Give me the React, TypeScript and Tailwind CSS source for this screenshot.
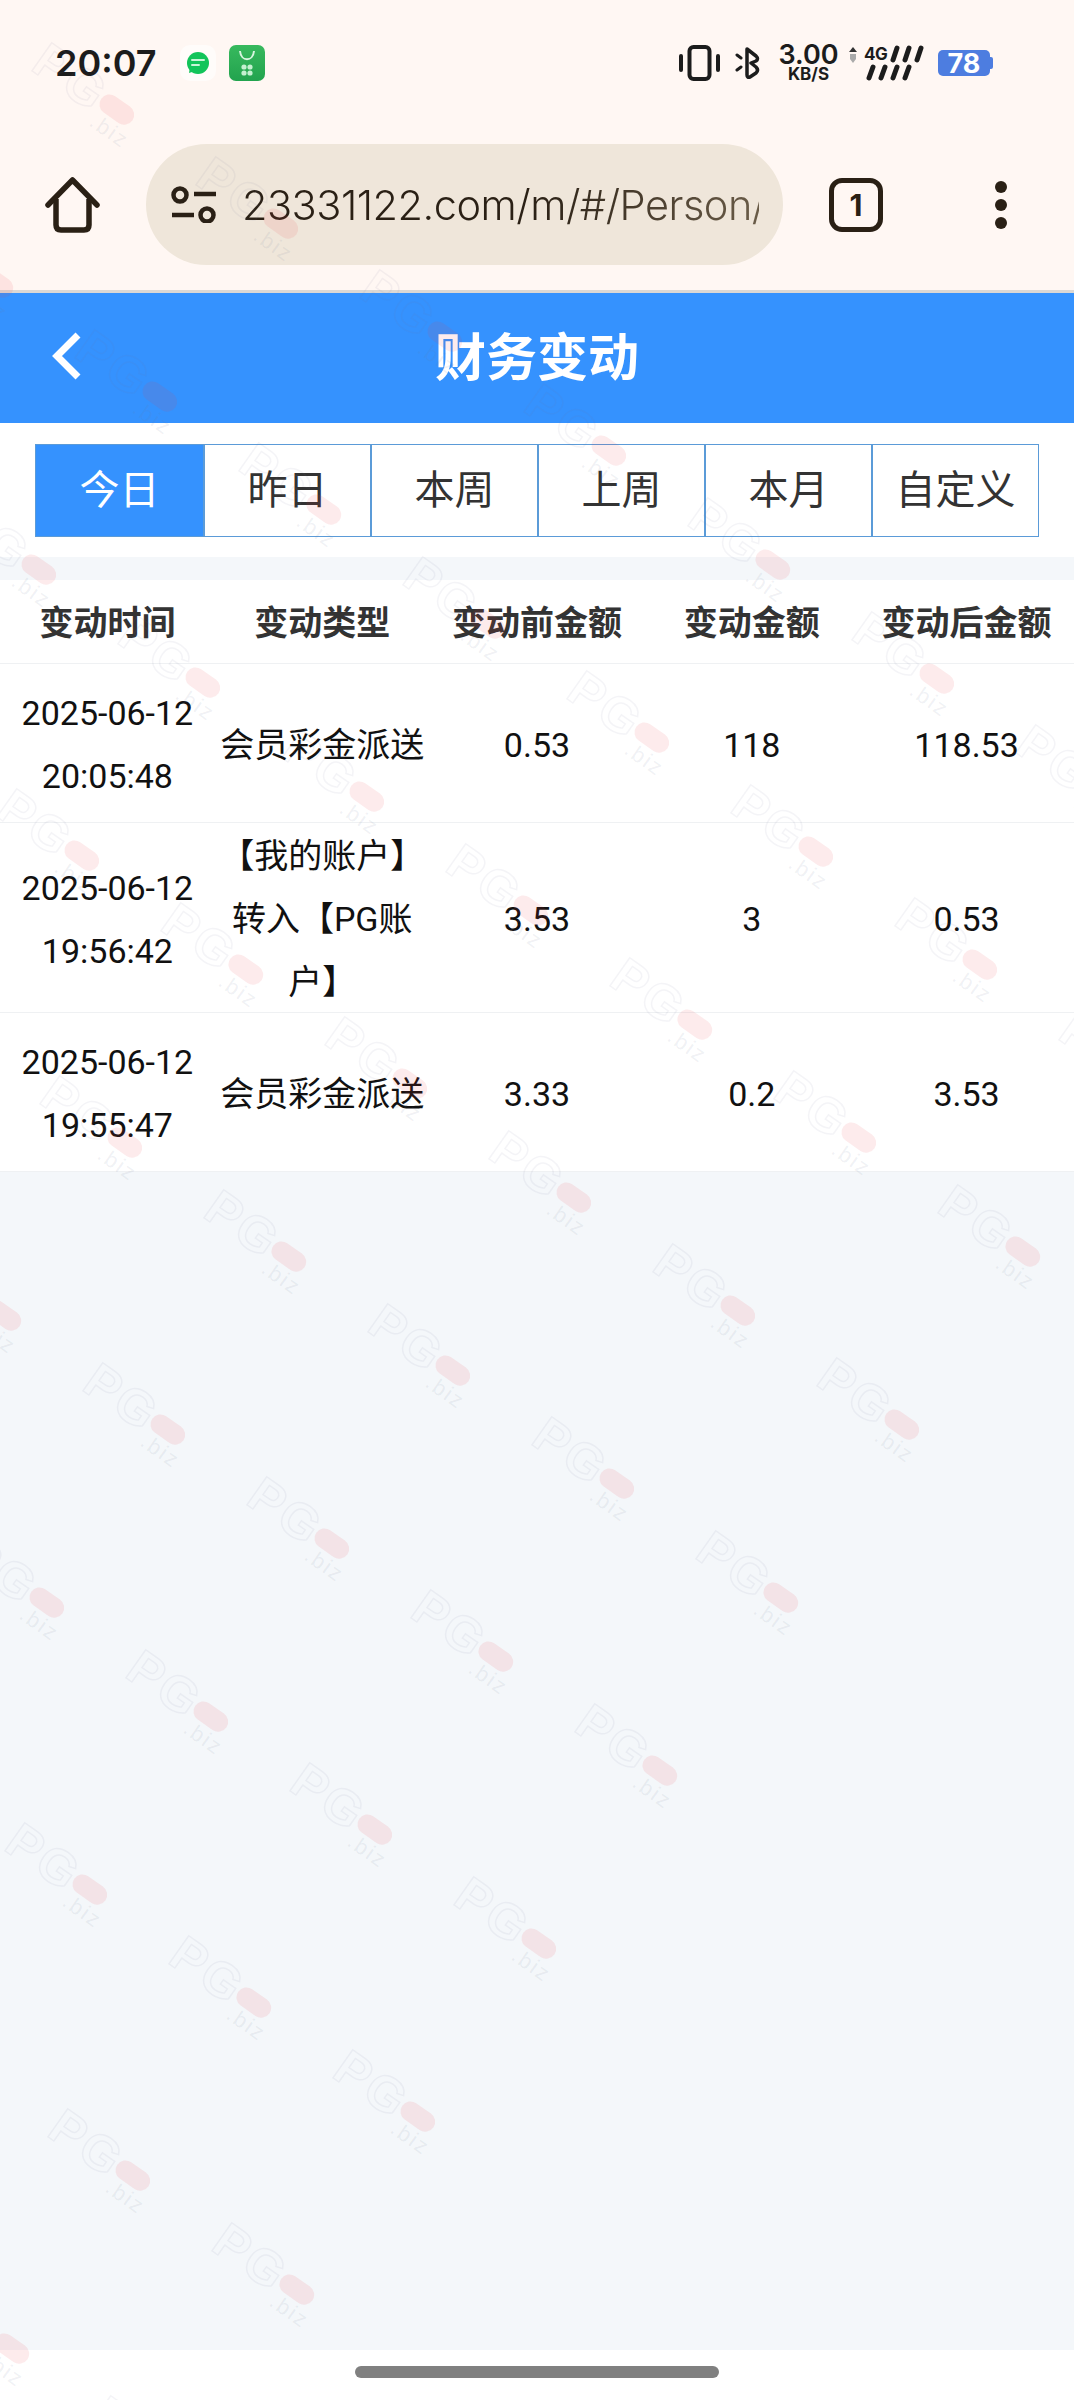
import React from 'react';

const tabs = ['今日', '昨日', '本周', '上周', '本月', '自定义'];
const columns = ['变动时间', '变动类型', '变动前金额', '变动金额', '变动后金额'];
const rows = [
  { time: '2025-06-12\n20:05:48', type: '会员彩金派送', before: '0.53', amount: '118', after: '118.53' },
  { time: '2025-06-12\n19:56:42', type: '【我的账户】\n转入【PG账\n户】', before: '3.53', amount: '3', after: '0.53' },
  { time: '2025-06-12\n19:55:47', type: '会员彩金派送', before: '3.33', amount: '0.2', after: '3.53' },
];

// the watermark is an 8 x 10 skewed lattice, pill centre of the first tile at 116,109
const marks: { x: number; y: number }[] = [];
for (let a = 0; a < 8; a++) {
  for (let b = 0; b < 10; b++) {
    marks.push({ x: 116 + a * 164 - b * 121, y: 109 + a * 113.7 + b * 173 });
  }
}

function Watermark({ x, y }: { x: number; y: number }) {
  return (
    <div className="absolute w-0 h-0 rotate-[35deg]" style={{ left: x, top: y }}>
      <span className="absolute left-[-94px] top-[-30px] font-['Liberation_Sans',sans-serif] text-[50px] leading-[60px] font-bold tracking-[3px] text-transparent [-webkit-text-stroke:1.5px_rgba(110,120,150,0.08)]">
        PG
      </span>
      <span className="absolute left-[-18px] top-[-10px] w-[38px] h-[20px] rounded-full bg-[rgba(235,60,70,0.1)]" />
      <span className="absolute left-[-14px] top-[10px] font-['Liberation_Sans',sans-serif] text-[22px] leading-[24px] tracking-[2px] text-[rgba(110,120,150,0.1)]">
        .biz
      </span>
    </div>
  );
}

function StatusBar() {
  return (
    <div className="h-[126px] flex items-center text-[#1c1c1c]">
      <span className="ml-[55px] w-[125px] font-['Inter',sans-serif] text-[36px] font-semibold leading-none">20:07</span>
      <div className="w-[36px] h-[36px] rounded-[10px] bg-white/60 flex items-center justify-center">
        <svg width="24" height="24" viewBox="0 0 24 24">
          <circle cx="12" cy="12" r="11" fill="#12c45a" />
          <path d="M6 9h12M6 14h7" stroke="#c9f5d8" strokeWidth="2" strokeLinecap="round" />
          <path d="M3 22l1-6 5 4z" fill="#12c45a" />
        </svg>
      </div>
      <div className="ml-[13px] w-[36px] h-[36px] rounded-[7px] bg-gradient-to-b from-[#37b95e] to-[#22a34e] flex items-center justify-center">
        <svg width="36" height="36" viewBox="0 0 36 36">
          <path d="M11 6c1 11 13 11 14 0" fill="none" stroke="#d8f5e0" strokeWidth="2" />
          <circle cx="15" cy="22" r="2.6" fill="#c4f0d0" />
          <circle cx="21" cy="22" r="2.6" fill="#c4f0d0" />
          <circle cx="15" cy="28" r="2.6" fill="#c4f0d0" />
          <circle cx="21" cy="28" r="2.6" fill="#c4f0d0" />
        </svg>
      </div>

      <svg className="ml-[414px]" width="41" height="36" viewBox="0 0 41 36">
        <rect x="10.5" y="2" width="20" height="32" rx="4" fill="none" stroke="#1c1c1c" strokeWidth="4" />
        <path d="M2 11v14M39 11v14" stroke="#1c1c1c" strokeWidth="4" strokeLinecap="round" />
      </svg>
      <svg className="ml-[15px]" width="26" height="36" viewBox="0 0 26 36">
        <path d="M12 4l9 7q3 3 0 5l-5 2 5 4q3 3 0 6l-6 4q-3 1-3-2z" fill="none" stroke="#1c1c1c" strokeWidth="3.5" strokeLinejoin="round" />
        <path d="M2 10l4 3M2 25l4-3" stroke="#1c1c1c" strokeWidth="3" strokeLinecap="round" />
      </svg>
      <div className="ml-[17px] w-[61px] flex flex-col items-center font-['Inter',sans-serif] text-[#1c1c1c]">
        <span className="text-[27px] leading-[22px] font-semibold">3.00</span>
        <span className="text-[17px] leading-[16px] font-bold">KB/S</span>
      </div>
      <svg className="ml-[10px]" width="8" height="36" viewBox="0 0 8 36">
        <path d="M4 2l4 5H0z" fill="#333" />
        <path d="M1 9h6v5l-3 4-3-4z" fill="#aaa" />
      </svg>
      <div className="ml-[5px] relative w-[62px] h-[36px]">
        <span className="absolute left-[2px] top-[0px] font-['Inter',sans-serif] text-[17px] leading-[18px] font-bold tracking-[-0.5px]">4G</span>
        <svg className="absolute left-0 top-0" width="62" height="36" viewBox="0 0 62 36">
          <path d="M31 15l4-12M43 15l4-12M55 15l4-12M7 33l4-11M19 33l4-11M31 33l4-11M43 33l4-11" stroke="#1c1c1c" strokeWidth="5" strokeLinecap="round" />
        </svg>
      </div>
      <div className="ml-[14px] flex items-center">
        <div className="w-[52px] h-[26px] rounded-[5px] bg-[#4d7de0] flex items-center justify-center font-['Inter',sans-serif] text-[27px] font-bold text-white leading-none">
          78
        </div>
        <div className="w-[3px] h-[12px] rounded-r-[2px] bg-[#4d7de0]" />
      </div>
    </div>
  );
}

function Toolbar() {
  return (
    <div className="mt-[18px] h-[121px] flex items-center">
      <svg className="ml-[45px] shrink-0" width="55" height="56" viewBox="0 0 55 56">
        <path d="M3 28L27.5 3 52 28" fill="none" stroke="#2a2015" strokeWidth="5.5" strokeLinecap="round" strokeLinejoin="round" />
        <path d="M11 22v26q0 5 5 5h23q5 0 5-5V22" fill="none" stroke="#2a2015" strokeWidth="5.5" />
      </svg>
      <div className="ml-[46px] w-[637px] h-[121px] shrink-0 rounded-full bg-[#efe6da] flex items-center">
        <svg className="ml-[25px] shrink-0" width="47" height="37" viewBox="0 0 47 37">
          <circle cx="9" cy="9" r="6.5" fill="none" stroke="#2a2015" strokeWidth="4.5" />
          <path d="M23 8h22M1 29h22" stroke="#2a2015" strokeWidth="4.5" />
          <circle cx="36" cy="29" r="6.5" fill="none" stroke="#2a2015" strokeWidth="4.5" />
        </svg>
        <div className="ml-[24px] w-[517px] overflow-hidden whitespace-nowrap font-['Inter',sans-serif] font-light text-[41.5px] tracking-[-0.5px] leading-[60px] bg-gradient-to-r from-[#2a2015] from-55% to-[#6a5c48] bg-clip-text text-transparent">
          23331122.com/m/#/Person/FinanceChange
        </div>
      </div>
      <div className="ml-[46px] w-[54px] h-[54px] shrink-0 rounded-[13px] border-[5px] border-[#2a2015] flex items-center justify-center font-['Inter',sans-serif] text-[30px] font-bold text-[#2a2015] leading-none">
        1
      </div>
      <div className="ml-[112px] flex flex-col gap-[6px] shrink-0">
        <span className="w-[12px] h-[12px] rounded-full bg-[#2a2015]" />
        <span className="w-[12px] h-[12px] rounded-full bg-[#2a2015]" />
        <span className="w-[12px] h-[12px] rounded-full bg-[#2a2015]" />
      </div>
    </div>
  );
}

export default function App() {
  return (
    <div className="relative w-[1074px] h-[2400px] overflow-hidden flex flex-col bg-white font-[Roboto,'Noto_Sans_CJK_SC',sans-serif]">
      {/* Browser chrome */}
      <div className="h-[293px] shrink-0 bg-[#fff7f3] border-b-[3px] border-[#dcd8d4]">
        <StatusBar />
        <Toolbar />
      </div>

      {/* Page header */}
      <div className="h-[130px] shrink-0 bg-[#3592fe] relative flex items-center justify-center">
        <svg className="absolute left-[50px] top-[38px]" width="34" height="50" viewBox="0 0 34 50">
          <path d="M28 4L7 25l21 21" fill="none" stroke="#fff" strokeWidth="7" />
        </svg>
        <h1 className="text-[51px] font-bold text-white leading-none">财务变动</h1>
      </div>

      {/* Range tabs */}
      <div className="h-[134px] shrink-0 px-[35px] pt-[21px]">
        <div className="grid grid-cols-6 h-[93px] border border-[#5b9bd8]">
          {tabs.map((tab, i) => (
            <div
              key={tab}
              className={`flex items-center justify-center text-[40px] leading-none ${
                i === 0 ? 'bg-[#3592fe] text-white' : 'bg-white text-[#333] border-l-2 border-[#5b9bd8]'
              }`}
            >
              {tab}
            </div>
          ))}
        </div>
      </div>

      <div className="flex-1 bg-[#f4f7fa] pt-[23px]">
        {/* Table */}
        <div className="bg-white">
          <div className="grid grid-cols-5 h-[84px] pt-[4px] border-b border-[#eff1f3]">
            {columns.map((col) => (
              <div key={col} className="flex items-center justify-center text-[34px] font-bold text-[#333] whitespace-nowrap">
                {col}
              </div>
            ))}
          </div>
          {rows.map((row) => (
            <div key={row.time} className="grid grid-cols-5 items-center border-b border-[#eff1f3] text-[34px] leading-[63px] text-[#111] text-center [&>div]:translate-y-[1.5px]">
              <div className="py-4 whitespace-pre-line">{row.time}</div>
              <div className="whitespace-pre-line">{row.type}</div>
              <div>{row.before}</div>
              <div>{row.amount}</div>
              <div>{row.after}</div>
            </div>
          ))}
        </div>
      </div>

      {/* Gesture bar */}
      <div className="h-[50px] shrink-0 bg-white flex justify-center pt-[16px]">
        <div className="w-[364px] h-[12px] rounded-full bg-[#808080]" />
      </div>

      {/* Watermark layer */}
      <div className="absolute inset-0 pointer-events-none overflow-hidden">
        {marks.map((m) => (
          <Watermark key={`${m.x}-${m.y}`} x={m.x} y={m.y} />
        ))}
      </div>
    </div>
  );
}
